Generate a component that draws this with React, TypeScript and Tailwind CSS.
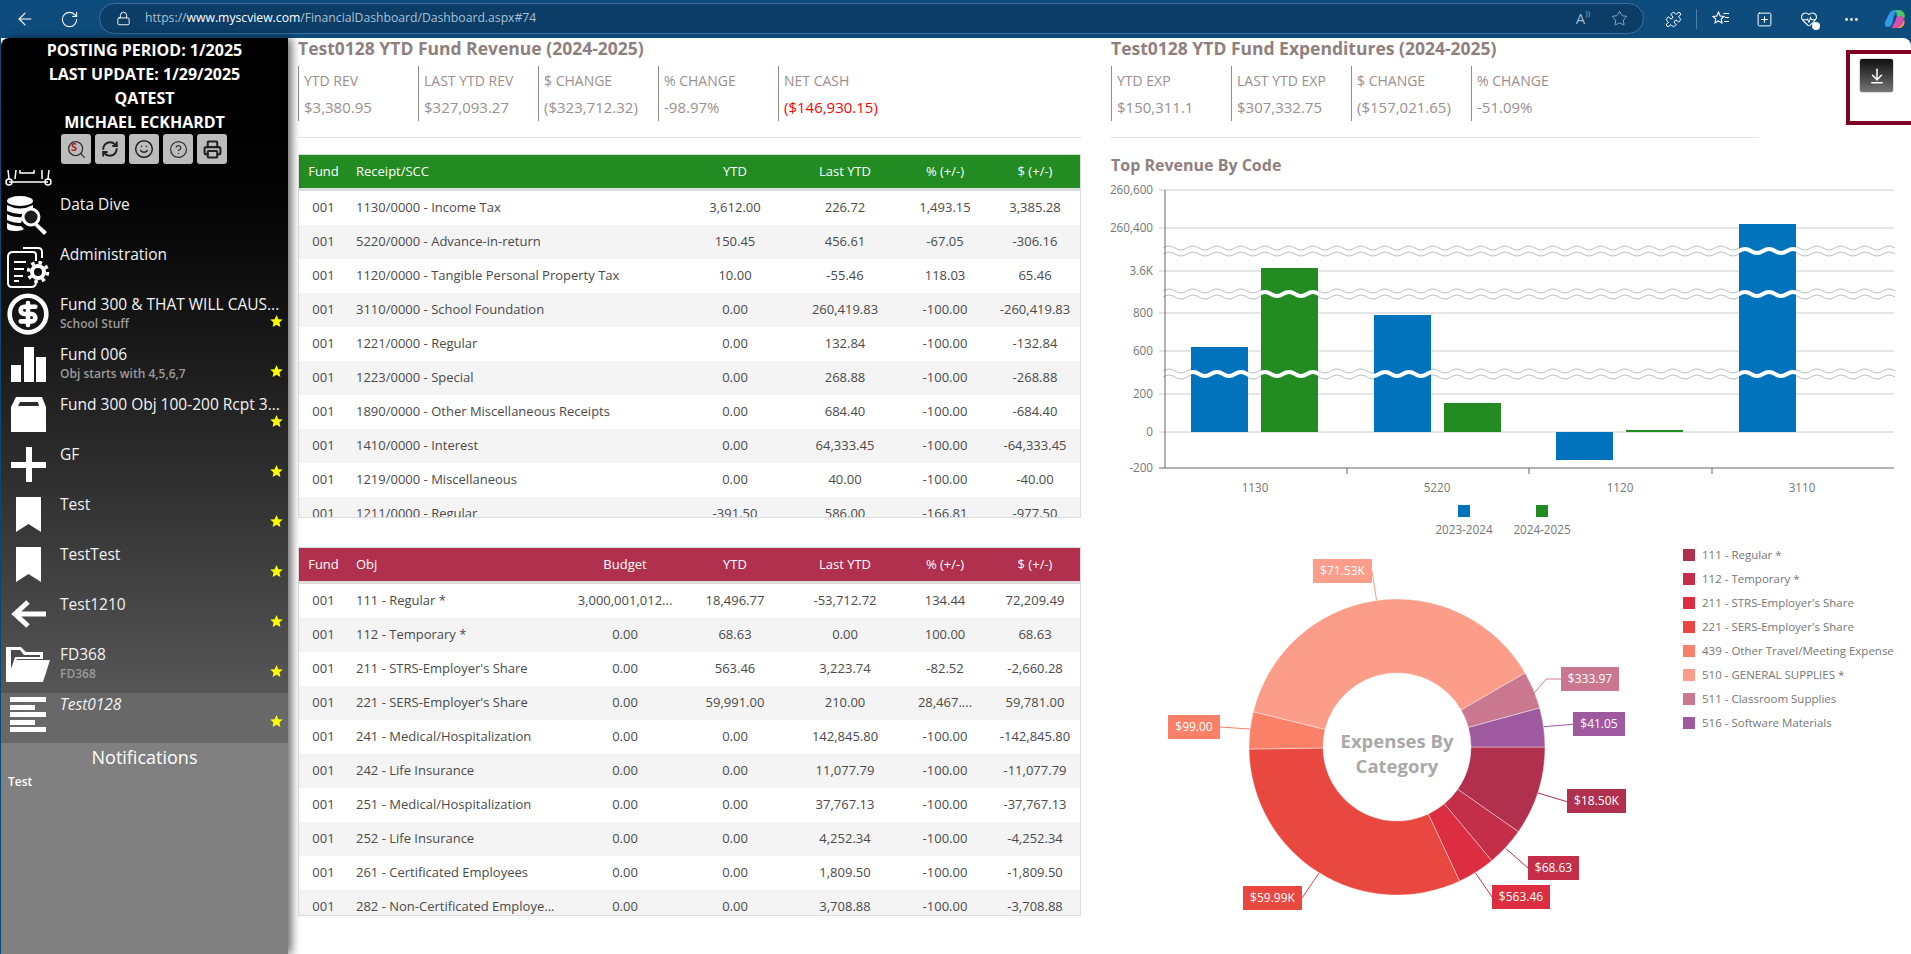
import React from 'react'
import { ArrowLeft, RotateCw, Lock, Star, Puzzle, SquarePlus, HeartPulse, Ellipsis, ArrowDownToLine, RefreshCw, Smile, CircleHelp, Printer, Search, CircleDollarSign } from 'lucide-react'

const font = { fontFamily: '"Open Sans", sans-serif' }

const revenueRows = [
  ['1130/0000 - Income Tax', '3,612.00', '226.72', '1,493.15', '3,385.28'],
  ['5220/0000 - Advance-in-return', '150.45', '456.61', '-67.05', '-306.16'],
  ['1120/0000 - Tangible Personal Property Tax', '10.00', '-55.46', '118.03', '65.46'],
  ['3110/0000 - School Foundation', '0.00', '260,419.83', '-100.00', '-260,419.83'],
  ['1221/0000 - Regular', '0.00', '132.84', '-100.00', '-132.84'],
  ['1223/0000 - Special', '0.00', '268.88', '-100.00', '-268.88'],
  ['1890/0000 - Other Miscellaneous Receipts', '0.00', '684.40', '-100.00', '-684.40'],
  ['1410/0000 - Interest', '0.00', '64,333.45', '-100.00', '-64,333.45'],
  ['1219/0000 - Miscellaneous', '0.00', '40.00', '-100.00', '-40.00'],
  ['1211/0000 - Regular', '-391.50', '586.00', '-166.81', '-977.50'],
]

const expenseRows = [
  ['111 - Regular *', '3,000,001,012...', '18,496.77', '-53,712.72', '134.44', '72,209.49'],
  ['112 - Temporary *', '0.00', '68.63', '0.00', '100.00', '68.63'],
  ["211 - STRS-Employer's Share", '0.00', '563.46', '3,223.74', '-82.52', '-2,660.28'],
  ["221 - SERS-Employer's Share", '0.00', '59,991.00', '210.00', '28,467....', '59,781.00'],
  ['241 - Medical/Hospitalization', '0.00', '0.00', '142,845.80', '-100.00', '-142,845.80'],
  ['242 - Life Insurance', '0.00', '0.00', '11,077.79', '-100.00', '-11,077.79'],
  ['251 - Medical/Hospitalization', '0.00', '0.00', '37,767.13', '-100.00', '-37,767.13'],
  ['252 - Life Insurance', '0.00', '0.00', '4,252.34', '-100.00', '-4,252.34'],
  ['261 - Certificated Employees', '0.00', '0.00', '1,809.50', '-100.00', '-1,809.50'],
  ['282 - Non-Certificated Employe...', '0.00', '0.00', '3,708.88', '-100.00', '-3,708.88'],
]

const slices = [
  { name: '111 - Regular *', color: '#b0304e', from: 0, to: 34.9 },
  { name: '112 - Temporary *', color: '#c42e48', from: 34.9, to: 50.2 },
  { name: "211 - STRS-Employer's Share", color: '#dc2e40', from: 50.2, to: 65 },
  { name: "221 - SERS-Employer's Share", color: '#e8483f', from: 65, to: 179.2 },
  { name: '439 - Other Travel/Meeting Expense', color: '#fa8067', from: 179.2, to: 193.8 },
  { name: '510 - GENERAL SUPPLIES *', color: '#fc9d8a', from: 193.8, to: 330 },
  { name: '511 - Classroom Supplies', color: '#c9788f', from: 330, to: 344.7 },
  { name: '516 - Software Materials', color: '#9e599f', from: 344.7, to: 360 },
]

const pieLabels = [
  { text: '$71.53K', x: 1313, y: 559, w: 59, color: '#fc9d8a', line: '1372,571 1376.5,600' },
  { text: '$333.97', x: 1561, y: 667, w: 58, color: '#c9788f', line: '1534.4,692.7 1546.3,679 1561,679' },
  { text: '$41.05', x: 1573, y: 712, w: 52, color: '#9e599f', line: '1544,726.7 1573,724.3' },
  { text: '$18.50K', x: 1567, y: 789, w: 59, color: '#b0304e', line: '1538,793 1567,801.7' },
  { text: '$68.63', x: 1528, y: 856, w: 51, color: '#c42e48', line: '1506,848.7 1528,868' },
  { text: '$563.46', x: 1492, y: 885, w: 58, color: '#dc2e40', line: '1475.6,873 1492,897' },
  { text: '$59.99K', x: 1243, y: 886, w: 59, color: '#e8483f', line: '1319,873 1302,898' },
  { text: '$99.00', x: 1168, y: 715, w: 52, color: '#fa8067', line: '1220,727 1250,729' },
]

const bars = [
  { x: 1191, top: 347, bottom: 432, color: '#0073bd' },
  { x: 1261, top: 268, bottom: 432, color: '#228b22' },
  { x: 1374, top: 315, bottom: 432, color: '#0073bd' },
  { x: 1444, top: 403, bottom: 432, color: '#228b22' },
  { x: 1556, top: 432, bottom: 460, color: '#0073bd' },
  { x: 1626, top: 430, bottom: 432, color: '#228b22' },
  { x: 1739, top: 224, bottom: 432, color: '#0073bd' },
]

const yTicks = [
  ['260,600', 190],
  ['260,400', 228],
  ['3.6K', 271],
  ['800', 313],
  ['600', 351],
  ['200', 394],
  ['0', 432],
] as const

function wave(y: number) {
  let d = `M1163 ${y}`
  for (let x = 1163; x < 1894; x += 12) {
    d += ` q6 ${(x - 1163) % 24 === 0 ? -4 : 4} 12 0`
  }
  return d
}

function arc(from: number, to: number) {
  const cx = 1397
  const cy = 747
  const p = (r: number, a: number) => {
    const t = (a * Math.PI) / 180
    return `${cx + r * Math.cos(t)} ${cy + r * Math.sin(t)}`
  }
  const big = to - from > 180 ? 1 : 0
  return `M${p(148, from)} A148 148 0 ${big} 1 ${p(148, to)} L${p(74, to)} A74 74 0 ${big} 0 ${p(74, from)} Z`
}

const Kpi = ({ label, value, red }: { label: string; value: string; red?: boolean }) => (
  <div className="w-[120px] h-[55px] border-l border-[#9a8c8c] pl-[5px] flex flex-col">
    <span className="text-[14px] leading-[20px] mt-[5px] text-[#9b8f8f] whitespace-nowrap">{label}</span>
    <span className={`text-[15px] leading-[20px] mt-[6px] whitespace-nowrap ${red ? 'text-[#ff0000]' : 'text-[#9b8f8f]'}`}>{value}</span>
  </div>
)

const Icons: Record<string, React.ReactNode> = {
  cart: (
    <g fill="none" stroke="white" strokeWidth="1.5">
      <path d="M7 0 L8 9 M15 0 L14 9 M19 0 L19 3 L33 3 L33 0 M41 0 L41 9 M48 0 L47 9 M8 12 L47 12" />
      <circle cx="8" cy="12" r="3" />
      <circle cx="47" cy="12" r="3" />
    </g>
  ),
  data: (
    <g fill="white">
      <ellipse cx="19" cy="8" rx="13" ry="5" />
      <path d="M6 12 q13 7 26 0 v6 q-13 6 -26 0 Z" />
      <path d="M6 21 q7 4 16 3 l-2 6 q-8 0 -14 -3 Z" />
      <path d="M6 30 q7 4 14 3 l3 3 q-3 2 -9 2 q-8 0 -8 -3 Z" />
      <circle cx="30" cy="24" r="8" fill="#1a1a1a" stroke="white" strokeWidth="3" />
      <path d="M36 30 L46 39 L43 42 L34 33 Z" />
    </g>
  ),
  admin: (
    <g fill="none" stroke="white" strokeWidth="2">
      <path d="M22 5 h15 q4 0 4 4 v6" />
      <path d="M12 9 h20 q3 0 3 3 v6" />
      <path d="M35 37 v2 q0 5 -5 5 H11 q-4 0 -4 -4 V14 q0 -5 5 -5" />
      <path d="M13 19 h12 M13 26 h10 M13 33 h9 M13 38 h5" />
      <circle cx="37" cy="29" r="6" strokeWidth="4" />
      <circle cx="37" cy="29" r="9.5" strokeWidth="3.5" strokeDasharray="3.5 4" />
    </g>
  ),
  chart: (
    <g fill="white">
      <rect x="10" y="22" width="10" height="17" />
      <rect x="23" y="4" width="10" height="35" />
      <rect x="35" y="14" width="10" height="25" />
    </g>
  ),
  box: (
    <g>
      <path d="M15 4 H41 L45 14 V39 H10 V14 Z" fill="white" />
      <path d="M19 9 H37 L38 13 H17 Z" fill="#2c2c2c" />
    </g>
  ),
  plus: <path d="M25 4 H31 V19 H45 V25 H31 V39 H25 V25 H10 V19 H25 Z" fill="white" />,
  bookmark: <path d="M15 4 H40 V39 L27.5 31 L15 39 Z" fill="white" />,
  back: <path d="M45 21 H15 M27 9 L14 21 L27 33" fill="none" stroke="white" strokeWidth="5" />,
  folder: (
    <g>
      <path d="M5 4 H20 L25 9 H42 V16 H16 L9 34 V39 H5 Z" fill="white" />
      <path d="M13 17 H49 L42 39 H6 Z" fill="white" />
      <path d="M10 7 H19 L23 12 H39 V14 H14 L10 26 Z" fill="#4a4a4a" />
    </g>
  ),
  lines: (
    <g fill="white">
      <rect x="9" y="4" width="36" height="5" />
      <rect x="9" y="12" width="25" height="5" />
      <rect x="9" y="19" width="36" height="5" />
      <rect x="9" y="27" width="25" height="5" />
      <rect x="9" y="34" width="36" height="5" />
    </g>
  ),
}

const navItems = [
  { icon: 'data', title: 'Data Dive' },
  { icon: 'admin', title: 'Administration' },
  { icon: 'dollar', title: 'Fund 300 & THAT WILL CAUS...', sub: 'School Stuff', star: true },
  { icon: 'chart', title: 'Fund 006', sub: 'Obj starts with 4,5,6,7', star: true },
  { icon: 'box', title: 'Fund 300 Obj 100-200 Rcpt 3...', star: true },
  { icon: 'plus', title: 'GF', star: true },
  { icon: 'bookmark', title: 'Test', star: true },
  { icon: 'bookmark', title: 'TestTest', star: true },
  { icon: 'back', title: 'Test1210', star: true },
  { icon: 'folder', title: 'FD368', sub: 'FD368', star: true },
  { icon: 'lines', title: 'Test0128', star: true, active: true },
]

const NavItem = ({ item }: { item: (typeof navItems)[number] & { sub?: string; star?: boolean; active?: boolean } }) => (
  <div className={`relative flex h-[50px] shrink-0 ${item.active ? 'bg-[#686868]' : ''}`}>
    <div className="w-[59px] shrink-0">
      {item.icon === 'dollar' ? (
        <CircleDollarSign size={44} strokeWidth={2.5} color="white" className="ml-[5px] -mt-[1px]" />
      ) : (
        <svg width="59" height="50" viewBox="0 0 59 50">
          {Icons[item.icon]}
        </svg>
      )}
    </div>
    <div className="min-w-0 flex flex-col">
      <span className={`text-[15.5px] leading-[22px] text-[#f2f2f2] whitespace-nowrap ${item.active ? 'italic' : ''}`}>{item.title}</span>
      {item.sub && <span className="text-[12px] leading-[16px] mt-[1px] font-semibold text-[#9a9a9a] whitespace-nowrap">{item.sub}</span>}
    </div>
    {item.star && (
      <svg className="absolute right-[5px] top-[22px]" width="13" height="12" viewBox="0 0 24 23">
        <path d="M12 0 L15.5 8 L24 8.8 L17.6 14.5 L19.5 23 L12 18.5 L4.5 23 L6.4 14.5 L0 8.8 L8.5 8 Z" fill="#ffff00" />
      </svg>
    )}
  </div>
)

const TopBar = () => (
  <div className="h-[38px] shrink-0 flex items-center text-white">
    <ArrowLeft size={20} strokeWidth={1.4} className="ml-[15px]" />
    <RotateCw size={19} strokeWidth={1.4} className="ml-[25px]" />
    <div className="ml-[20px] w-[1545px] h-[31px] -mt-[2px] rounded-full bg-[#0b3d66] border border-[#3f6f98] flex items-center">
      <Lock size={15} strokeWidth={1.5} className="ml-[16px]" />
      <span className="ml-[14px] text-[12.2px] whitespace-nowrap text-[#a9c0d6]">
        https://<span className="text-white font-medium">www.myscview.com</span>/FinancialDashboard/Dashboard.aspx#74
      </span>
      <span className="ml-auto text-[15px] text-[#9fb6cc]">A</span>
      <span className="text-[8px] -mt-[10px] text-[#9fb6cc]">))</span>
      <Star size={17} strokeWidth={1.2} className="ml-[21px] mr-[15px] text-[#9fb6cc]" />
    </div>
    <Puzzle size={17} strokeWidth={1.4} className="ml-[21px]" />
    <div className="ml-[14px] w-px h-[20px] bg-[#4f7da6]" />
    <svg className="ml-[15px]" width="18" height="18" viewBox="0 0 18 18" fill="none" stroke="white" strokeWidth="1.1">
      <path d="M6.5 2 L8.2 6 L12 6.4 L9.2 9 L10 13 L6.5 11 L3 13 L3.8 9 L1 6.4 L4.8 6 Z" />
      <path d="M11.5 3.5 H17 M13 7.5 H17 M12 11.5 H17" />
    </svg>
    <SquarePlus size={17} strokeWidth={1.4} className="ml-[26px]" />
    <div className="relative ml-[27px]">
      <HeartPulse size={18} strokeWidth={1.4} />
      <span className="absolute right-[-2px] bottom-[-2px] w-[8px] h-[8px] rounded-full bg-white" />
    </div>
    <Ellipsis size={17} strokeWidth={2} className="ml-[25px]" />
    <svg className="ml-[24px]" width="22" height="24" viewBox="0 0 22 24">
      <path d="M4 9 Q6 3 11 3 H14 Q10 6 9 13 Q8 20 4 20 Q0 20 1 15 Z" fill="#2f9be8" />
      <path d="M12 3 H16 Q20 4 21 9 L20 12 Q18 9 13 10 Z" fill="#4fc26a" />
      <path d="M8 20 Q12 14 13 9 H18 Q20 12 19 15 Q17 21 13 21 H8 Z" fill="#d94fb0" />
      <path d="M13 21 Q18 20 20 12 Q22 18 17 21 Z" fill="#f59b3a" />
    </svg>
  </div>
)

const Sidebar = () => (
  <div className="relative z-10 w-[287px] shrink-0 flex flex-col rounded-tl-lg overflow-hidden shadow-[4px_0_8px_rgba(0,0,0,0.55)]">
    <div className="h-[705px] shrink-0 flex flex-col bg-linear-to-b from-[#000000] to-[#606060]">
      <div className="text-center text-white font-bold text-[16px] leading-[24px]">
        <div>POSTING PERIOD: 1/2025</div>
        <div>LAST UPDATE: 1/29/2025</div>
        <div>QATEST</div>
        <div>MICHAEL ECKHARDT</div>
      </div>
      <div className="h-[30px] flex justify-center gap-[4px] pr-[1px]">
        <div className="w-[30px] rounded-[3px] bg-[#bcbcbc] flex items-center justify-center relative">
          <Search size={21} color="#333" strokeWidth={1.5} />
          <span className="absolute text-[11px] font-bold text-[#b02020] left-[10px] top-[5px]">S</span>
        </div>
        <div className="w-[30px] rounded-[3px] bg-[#bcbcbc] flex items-center justify-center"><RefreshCw size={18} color="#222" strokeWidth={2.6} /></div>
        <div className="w-[30px] rounded-[3px] bg-[#bcbcbc] flex items-center justify-center"><Smile size={20} color="#222" strokeWidth={1.8} /></div>
        <div className="w-[30px] rounded-[3px] bg-[#bcbcbc] flex items-center justify-center"><CircleHelp size={19} color="#333" strokeWidth={1.6} /></div>
        <div className="w-[30px] rounded-[3px] bg-[#bcbcbc] flex items-center justify-center"><Printer size={19} color="#222" strokeWidth={2.6} /></div>
      </div>
      <div className="mt-[6px] flex-1 flex flex-col overflow-hidden">
        <div className="h-[23px] shrink-0 overflow-hidden">
          <svg width="59" height="23" viewBox="0 0 59 23">{Icons.cart}</svg>
        </div>
        {navItems.map((item) => (
          <NavItem key={item.title} item={item} />
        ))}
      </div>
    </div>
    <div className="flex-1 bg-[#808080] text-white">
      <div className="text-center text-[18px] leading-[28px]">Notifications</div>
      <div className="mt-[3px] pl-[7px] text-[12px] leading-[16px] font-semibold">Test</div>
    </div>
  </div>
)

const Cell = ({ children, left }: { children: React.ReactNode; left?: boolean }) => (
  <div className={`whitespace-nowrap overflow-hidden ${left ? 'text-left pl-[8px]' : 'text-center'}`}>{children}</div>
)

const DataTable = ({ head, rows, color, cols, height }: { head: string[]; rows: string[][]; color: string; cols: string; height: string }) => (
  <div className={`${height} border border-[#dddddd] overflow-hidden text-[13px]`}>
    <div className={`grid ${cols} h-[36px] items-center text-white font-normal border-b-[3px] border-[#dddddd] ${color}`}>
      {head.map((h, i) => (
        <Cell key={h} left={i === 1}>{h}</Cell>
      ))}
    </div>
    {rows.map((row, r) => (
      <div key={row[0]} className={`grid ${cols} h-[34px] items-center text-[#4a4a4a] ${r % 2 ? 'bg-[#f4f4f4]' : 'bg-white'}`}>
        <Cell>001</Cell>
        {row.map((c, i) => (
          <Cell key={i} left={i === 0}>{c}</Cell>
        ))}
      </div>
    ))}
  </div>
)

const BarChart = () => (
  <svg className="block overflow-visible" width="789" height="362" viewBox="1111 178 789 362" fontSize="11.7" fill="#767676">
    {yTicks.map(([label, y]) => (
      <g key={label}>
        <line x1="1159" x2="1894" y1={y} y2={y} stroke="#cccccc" />
        <text x="1153" y={y + 4} textAnchor="end">{label}</text>
      </g>
    ))}
    <text x="1153" y="472" textAnchor="end">-200</text>
    {[251, 294, 374].map((y) => (
      <g key={y} fill="none" stroke="#bbbbbb">
        <path d={wave(y - 3)} />
        <path d={wave(y + 3)} />
      </g>
    ))}
    {bars.map((b) => (
      <rect key={b.x} x={b.x} y={b.top} width="57" height={b.bottom - b.top} fill={b.color} />
    ))}
    {[251, 294, 374].map((y) => (
      <path key={y} d={wave(y)} fill="none" stroke="white" strokeWidth="4" />
    ))}
    <line x1="1165" x2="1165" y1="190" y2="468" stroke="#666666" />
    <line x1="1159" x2="1894" y1="468" y2="468" stroke="#666666" />
    {[1347, 1529, 1712].map((x) => (
      <line key={x} x1={x} x2={x} y1="468" y2="474" stroke="#666666" />
    ))}
    {[['1130', 1255], ['5220', 1437], ['1120', 1620], ['3110', 1802]].map(([t, x]) => (
      <text key={t} x={x} y="492" textAnchor="middle">{t}</text>
    ))}
    <rect x="1458" y="505" width="12" height="12" fill="#0073bd" />
    <rect x="1536" y="505" width="12" height="12" fill="#228b22" />
    <text x="1464" y="534" textAnchor="middle">2023-2024</text>
    <text x="1542" y="534" textAnchor="middle">2024-2025</text>
  </svg>
)

const Donut = () => (
  <svg className="block shrink-0" width="572" height="390" viewBox="1111 540 572 390">
    {slices.map((s) => (
      <path key={s.name} d={arc(s.from, s.to)} fill={s.color} stroke="white" strokeWidth="0.4" />
    ))}
    {pieLabels.map((l) => (
      <g key={l.text}>
        <polyline points={l.line} fill="none" stroke={l.color} />
        <rect x={l.x} y={l.y} width={l.w} height="24" fill={l.color} />
        <text x={l.x + l.w / 2} y={l.y + 16} textAnchor="middle" fontSize="12" fill="white">{l.text}</text>
      </g>
    ))}
    <text x="1397" y="748" textAnchor="middle" fontSize="18.5" fontWeight="700" fill="#a9a9a9">Expenses By</text>
    <text x="1397" y="773" textAnchor="middle" fontSize="18.5" fontWeight="700" fill="#a9a9a9">Category</text>
  </svg>
)

const App = () => {
  return (
    <div className="relative h-[954px] w-[1911px] overflow-hidden bg-[#0e4c7e] flex flex-col" style={font}>
      <TopBar />
      <div className="flex-1 min-h-0 ml-[1px] flex bg-white rounded-tr-lg">
        <Sidebar />
        <div className="ml-[10px] w-[783px] shrink-0">
          <h1 className="h-[20px] text-[17.5px] leading-[20px] font-bold text-[#8f8080] whitespace-nowrap">Test0128 YTD Fund Revenue (2024-2025)</h1>
          <div className="mt-[8px] flex">
            <Kpi label="YTD REV" value="$3,380.95" />
            <Kpi label="LAST YTD REV" value="$327,093.27" />
            <Kpi label="$ CHANGE" value="($323,712.32)" />
            <Kpi label="% CHANGE" value="-98.97%" />
            <Kpi label="NET CASH" value="($146,930.15)" red />
          </div>
          <div className="mt-[16px] h-px bg-[#e2e2e2]" />
          <div className="mt-[16px]">
            <DataTable
              head={['Fund', 'Receipt/SCC', 'YTD', 'Last YTD', '% (+/-)', '$ (+/-)']}
              rows={revenueRows}
              color="bg-[#228b22]"
              cols="grid-cols-[49px_332px_110px_110px_90px_90px]"
              height="h-[364px]"
            />
          </div>
          <div className="mt-[29px]">
            <DataTable
              head={['Fund', 'Obj', 'Budget', 'YTD', 'Last YTD', '% (+/-)', '$ (+/-)']}
              rows={expenseRows}
              color="bg-[#b0304e]"
              cols="grid-cols-[49px_222px_110px_110px_110px_90px_90px]"
              height="h-[369px]"
            />
          </div>
        </div>
        <div className="ml-[30px] flex-1 min-w-0">
          <h1 className="h-[20px] text-[17.5px] leading-[20px] font-bold text-[#8f8080] whitespace-nowrap">Test0128 YTD Fund Expenditures (2024-2025)</h1>
          <div className="mt-[8px] flex">
            <Kpi label="YTD EXP" value="$150,311.1" />
            <Kpi label="LAST YTD EXP" value="$307,332.75" />
            <Kpi label="$ CHANGE" value="($157,021.65)" />
            <Kpi label="% CHANGE" value="-51.09%" />
          </div>
          <div className="mt-[16px] w-[647px] h-px bg-[#e2e2e2]" />
          <h2 className="mt-[16px] h-[24px] text-[16px] leading-[22px] font-bold text-[#8f8080]">Top Revenue By Code</h2>
          <BarChart />
          <div className="flex">
            <Donut />
            <div className="mt-[3px] flex flex-col text-[11.5px] text-[#767676]">
              {slices.map((s) => (
                <div key={s.name} className="h-[24px] flex items-center whitespace-nowrap">
                  <span className="w-[12px] h-[12px] mr-[7px] shrink-0" style={{ background: s.color }} />
                  {s.name}
                </div>
              ))}
            </div>
          </div>
        </div>
      </div>
      <div className="absolute left-[1846px] top-[50px] w-[80px] h-[75px] border-[4px] border-[#7f0020]">
        <div className="ml-[9px] mt-[4px] w-[35px] h-[35px] rounded-[3px] border border-[#dddddd] bg-linear-to-b from-[#111111] to-[#777777] flex items-center justify-center">
          <ArrowDownToLine size={18} color="white" strokeWidth={2} />
        </div>
      </div>
    </div>
  )
}

export default App
